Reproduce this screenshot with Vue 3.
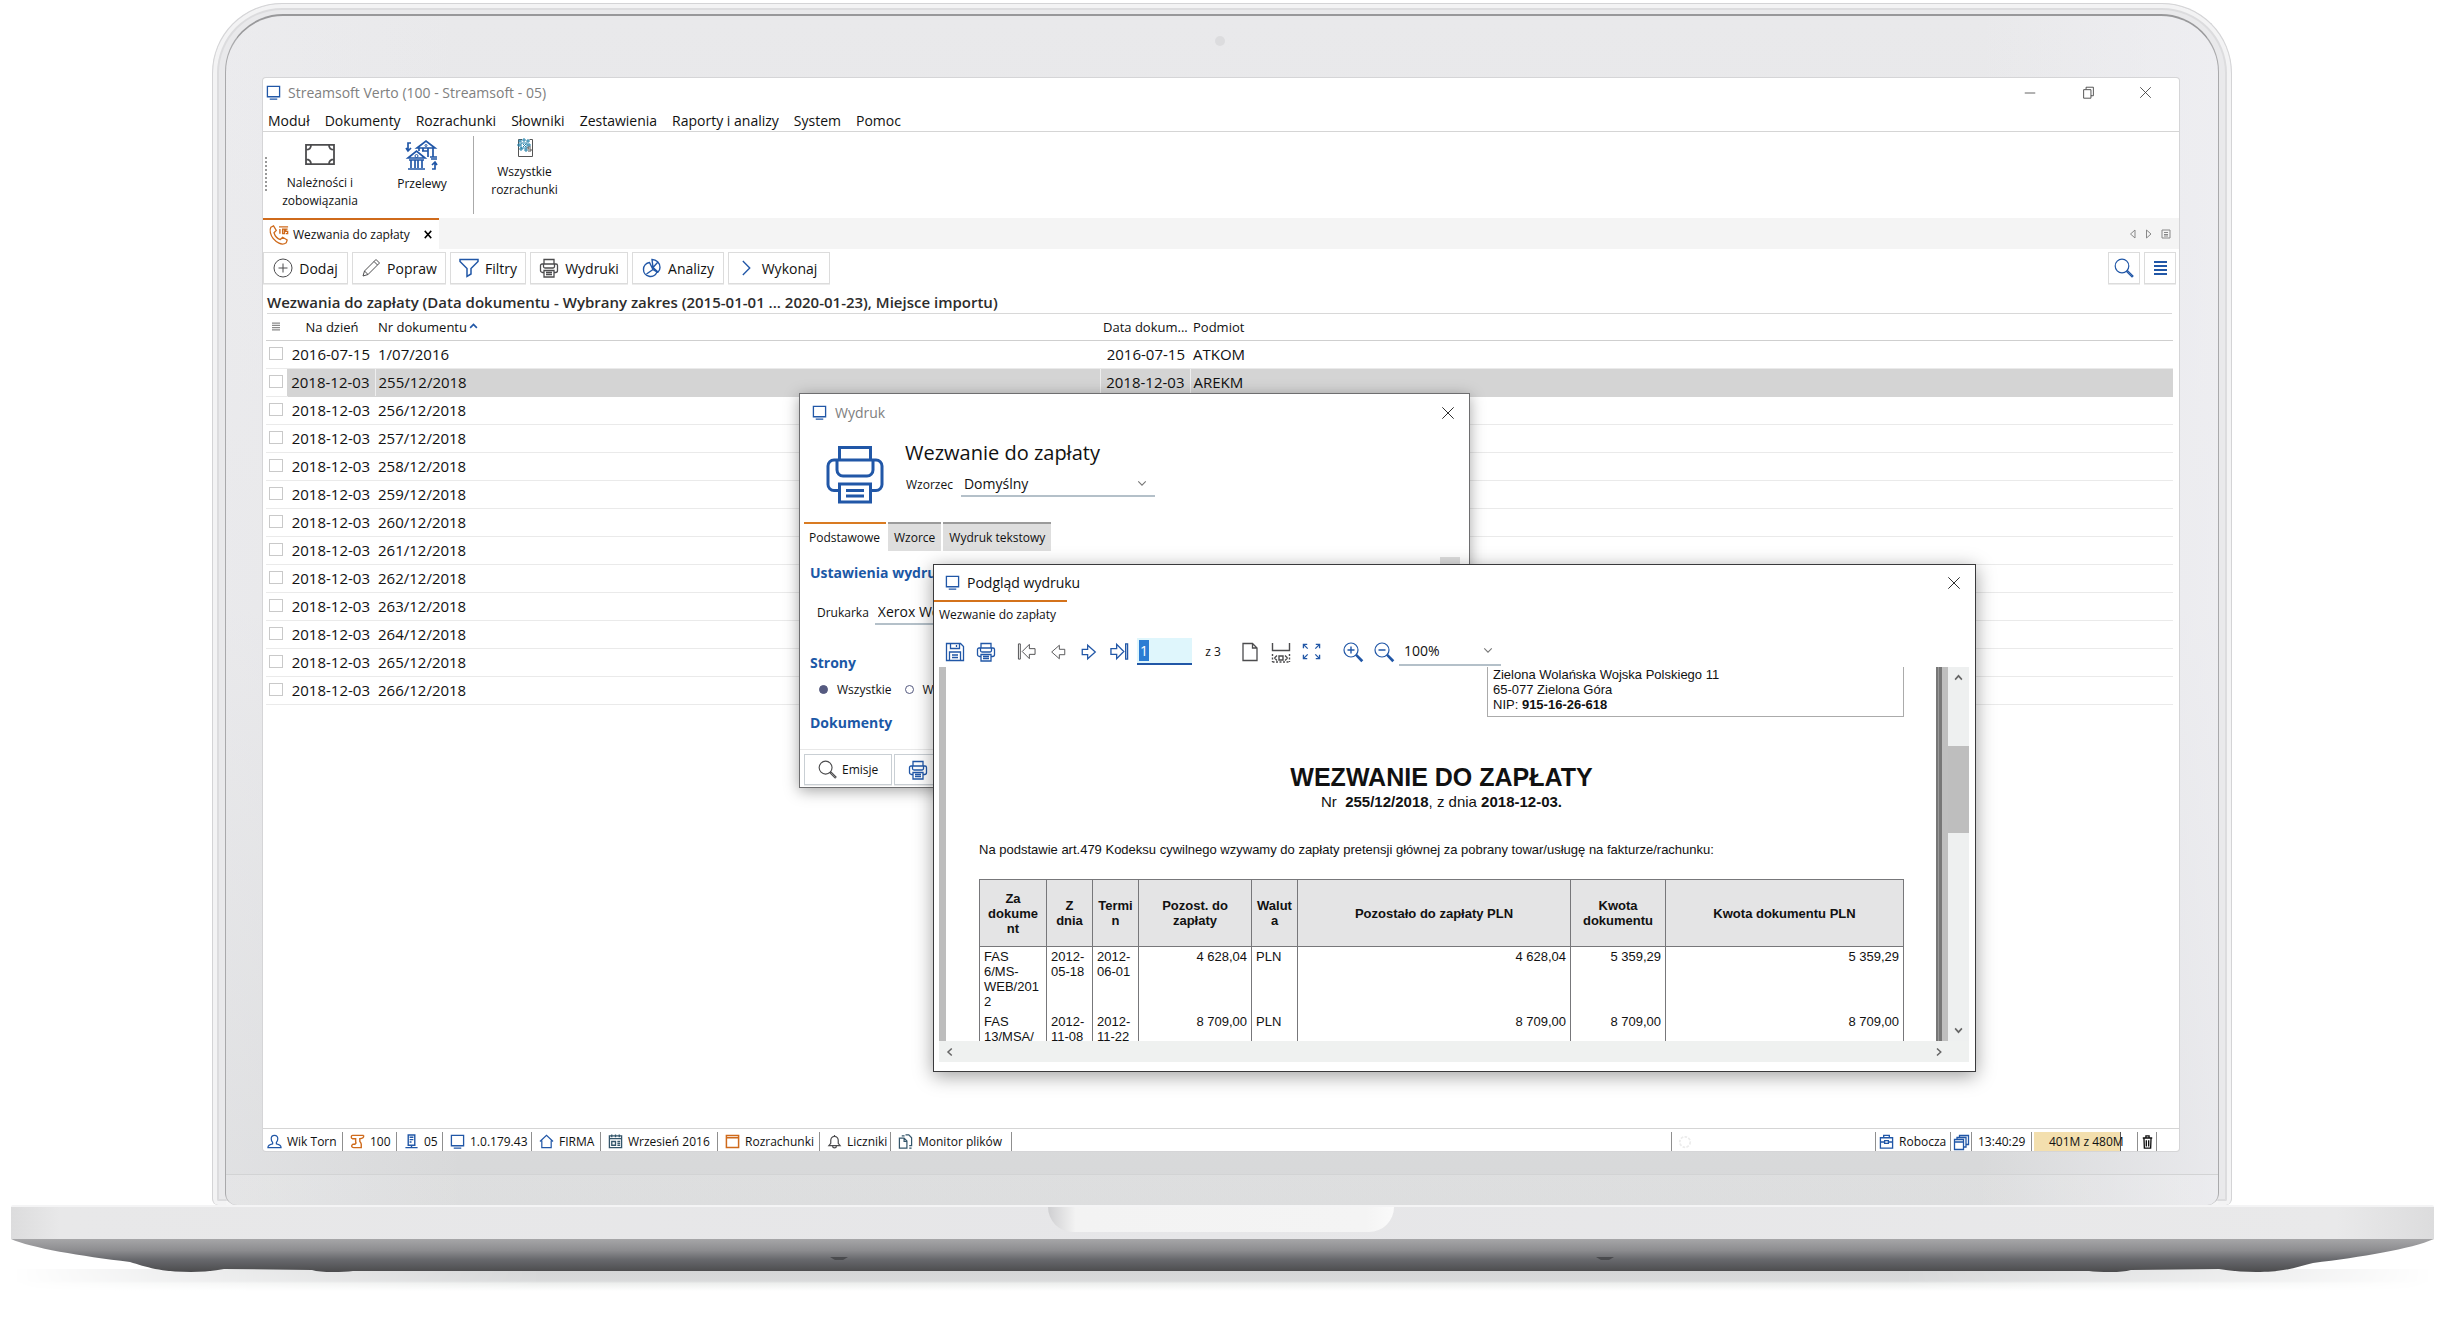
<script setup>
import { h, ref } from 'vue'

const icons = {
  monitor: ['0 0 16 16', '<path d="M1.5 1.5h13v11h-13zM4 15h8" stroke-width="1.4"/>'],
  minimize: ['0 0 16 16', '<path d="M1 8h14"/>'],
  restore: ['0 0 16 16', '<path d="M2 4.500h9v10.500h-9zM5 4V1.500h9v10.500h-3"/>'],
  close: ['0 0 16 16', '<path d="M1.500 1.500l13 13M14.500 1.500l-13 13"/>'],
  banknote: ['0 0 32 24', '<path d="M2 2h28v20H2zM2 7c4 0 5-2 5-5M25 2c0 3 1 5 5 5M30 17c-4 0-5 2-5 5M7 22c0-3-1-5-5-5" stroke-width="1.800"/>'],
  banks: ['0 0 32 32', '<path d="M11 9l9-7 9 7zM13 9v3M17 9v3M22 9v9M27 9v9M24 18h7M25 20h6M2 19l8.500-7 8.500 7zM3 21h15M5 21v8M9 21v8M12 21v8M16 21v8M2 30h17M16 12h6v6M5 4H2v8M0 9l2 3 3-3M26 30h3v-6M26 26l3-3 2 3" stroke-width="1.700"/><circle cx="10.500" cy="17" r="1.500"/><circle cx="20" cy="6.500" r="1"/>'],
  settlement: ['0 0 18 20', '<path d="M6 1.500H2.500v17h14v-17h-3" stroke="#555"/><path d="M3 2h2v2h-2zM7 1h2v2h-2zM11 2h2v2h-2zM2 6h2v2h-2zM5 5h6v5h-6zM12 6h2v2h-2zM4 10h2v2h-2zM9 11h2v2h-2zM7 6l3 3M10 6l-3 3" stroke="#1f7fa8"/><path d="M15 9h-3v2h3v2h-3" stroke="#555"/>'],
  phone: ['0 0 22 22', '<path d="M2 2.500l3-1.500 3 5-2.500 2.500c1 3.500 4 6.500 7 7.500L15 13.500l5 3-1 3c-2 1.500-5 2-8 .5C6 17.500 2.500 13 1.500 8.500 1 6 1 4 2 2.500z" stroke-width="1.400"/><path d="M11 2h10M12 4.500v5M15 4.500h2v5h-2zM20.500 4.500h-2V7h2v2.500h-2" stroke-width="1.500"/>'],
  plus: ['0 0 20 20', '<circle cx="10" cy="10" r="9"/><path d="M10 5.500v9M5.500 10h9"/>'],
  pencil: ['0 0 20 20', '<path d="M2 18l1.500-5L15 1.500l3.500 3.500L7 16.500zM13 3.500l3.500 3.500M3.500 13L7 16.500"/>'],
  funnel: ['0 0 20 20', '<path d="M1 1.500h18v2l-7 7V16l-4 2.500v-8l-7-7z" stroke-width="1.500"/>'],
  printer: ['0 0 20 20', '<path d="M5 6V1.500h10V6M5 14.500H3.500a2 2 0 0 1-2-2v-5A1.500 1.500 0 0 1 3 6h14a1.500 1.500 0 0 1 1.500 1.500v5a2 2 0 0 1-2 2H15M4.500 6v2.500a1.500 1.500 0 0 0 1.500 1.500h8a1.500 1.500 0 0 0 1.500-1.500V6M5 12.500h10v6.500H5zM7 14.500h6M7 16.500h6" stroke-width="1.300"/>'],
  printerBig: ['0 0 58 58', '<path d="M13.500 14V1.500h31V14M13.500 44.500H8a6 6 0 0 1-6-6V20a6 6 0 0 1 6-6h42a6 6 0 0 1 6 6v18.500a6 6 0 0 1-6 6h-5.500M11 14v10a6 6 0 0 0 6 6h24a6 6 0 0 0 6-6V14M13.500 38h31v18h-31zM20 44.500h18M20 50h18" stroke-width="3"/>'],
  pie: ['0 0 20 20', '<path d="M7.500 4.500a7 7 0 1 0 7.500 9.500l-4-2.500-3.500-7zM11 9.500L10 1.500a8 8 0 0 1 8 8c0 2-1 3.500-2 4.500zM11 9.500l4.500-5M11 11.500L4.500 16" stroke-width="1.400"/>'],
  chevronRight: ['0 0 12 20', '<path d="M2 3l7.500 7L2 17" stroke-width="1.500"/>'],
  chevronLeft: ['0 0 12 20', '<path d="M9.500 3L2 10l7.500 7" stroke-width="3"/>'],
  chevronBold: ['0 0 12 20', '<path d="M2 3l7.500 7L2 17" stroke-width="3"/>'],
  chevronDown: ['0 0 12 8', '<path d="M1.500 1.500L6 6l4.500-4.500" stroke-width="1.300"/>'],
  arrowDown: ['0 0 12 8', '<path d="M1.500 1.500L6 6l4.500-4.500" stroke-width="2.200"/>'],
  arrowUp: ['0 0 12 8', '<path d="M1.500 6.500L6 2l4.500 4.500" stroke-width="2.200"/>'],
  search: ['0 0 20 20', '<circle cx="8" cy="8" r="6.800" stroke-width="1.200"/><path d="M12.500 13.500l1-1 5.500 5.500-1 1z" stroke-width="1.200"/>'],
  lines: ['0 0 14 16', '<path d="M0 2h14M0 6h14M0 10h14M0 14h14" stroke-width="1.800"/>'],
  triLeft: ['0 0 8 10', '<path d="M6 1v8L1.500 5z"/>'],
  triRight: ['0 0 8 10', '<path d="M1.500 1v8L6 5z"/>'],
  docList: ['0 0 10 10', '<path d="M1 1h8v8H1zM3 3.500h4M3 5.500h4M3 7h4"/>'],
  user: ['0 0 16 16', '<path d="M8 1.500c-2.500 0-3.500 1.500-3.500 3.500S5 8 6 9v1.500c-2.500.5-5 1.500-5 4h14c0-2.500-2.500-3.500-5-4V9c1-1 1.500-2 1.500-4S10.500 1.500 8 1.500z" stroke-width="1.300"/>'],
  scroll: ['0 0 16 16', '<path d="M2.500 1.500h12M2.500 1.500C1 2 1 4.500 2.500 5H6v3c1 2-1 3-1 3H3C1 12 1.500 14.500 4 14.500h8V11M14.500 1.500c.5 2-1 3.500-4 3.500v3c1 1 1.500 2 1.500 3" stroke-width="1.500"/>'],
  server: ['0 0 16 16', '<path d="M4.500 1h7v11h-7zM6 3.500h4M6 6h4M6 8.500h2M8 12v2.500M1.500 14.500h13" stroke-width="1.500"/>'],
  house: ['0 0 16 16', '<path d="M1 8l7-6.500L15 8M3 7v7.500h10V7" stroke-width="1.300"/>'],
  calendar: ['0 0 16 16', '<path d="M1.500 2h13v12.500h-13zM1.500 5h13M4 .5v3M8 .5v3M12 .5v3M4 8h4v4H4zM10 8h3M10 10h3M10 12h3" stroke-width="1.400"/>'],
  window: ['0 0 16 16', '<path d="M1.500 1.500h13v13h-13zM1.500 4h13" stroke-width="1.600"/>'],
  bell: ['0 0 16 16', '<path d="M8 1v1.500C5 2.500 4 5 4 7v3l-2 2.500h12L12 10V7c0-2-1-4.500-4-4.500M6 13c0 2.500 4 2.500 4 0" stroke-width="1.300"/>'],
  files: ['0 0 16 16', '<path d="M1.500 4.500h5l3 3v7.500h-8zM4 2h3M8 1h3.500l3 3v8.500H12M14.500 15H12M6.500 4.500V8h3" stroke-width="1.300"/>'],
  briefcase: ['0 0 16 16', '<path d="M1.500 4h13v11h-13zM5 4V1.500h6V4M1.500 8.500h4M10.500 8.500h4M6 7h4v3H6z" stroke-width="1.400"/>'],
  windows: ['0 0 16 16', '<path d="M1.500 5.500h9v10h-9zM1.500 8h9M4 5V3.500h9v9.500h-2M6.500 3V1.500h9v9h-2" stroke-width="1.300"/>'],
  trash: ['0 0 14 16', '<path d="M1 3.500h12M5 3V1h4v2M2.500 4l.5 11h8l.5-11M5.500 6v7M8.500 6v7" stroke-width="1.700"/>'],
  save: ['0 0 20 20', '<path d="M1.500 1.500h14l3 3v14h-17zM5.500 1.500v5h9v-5M4.500 18.500v-8.500h11v8.500M7 13h6M7 15.500h6M11.500 3v2" stroke-width="1.300"/>'],
  first: ['0 0 20 20', '<path d="M1.500 2v16h2V2zM19 7v6h-6v4.500L5.500 10 13 2.500V7z"/>'],
  prev: ['0 0 20 20', '<path d="M17.500 7v6h-6v4.500L3 10l8.500-7.500V7z"/>'],
  next: ['0 0 20 20', '<path d="M2.500 7v6h6v4.500L17 10 8.500 2.500V7z" stroke-width="1.400"/>'],
  last: ['0 0 20 20', '<path d="M18.500 2v16h-2V2zM1 7v6h6v4.500L14.500 10 7 2.500V7z" stroke-width="1.400"/>'],
  page: ['0 0 20 20', '<path d="M3 1.500h9.500L17 6v12.500H3zM12.500 1.500V6H17" stroke-width="1.300"/>'],
  pageWidth: ['0 0 20 20', '<path d="M1.500 1v7.500h17V1M3.500 16l2.500-2.500M3.500 16l2.500 2.500M16.500 16L14 13.500M16.500 16L14 18.500M8 14h4v4H8z" stroke-width="1.400"/><path d="M1.500 12v8M18.500 12v8M1.500 20h17" stroke-width="1.400" stroke-dasharray="2 1.500"/>'],
  expand: ['0 0 20 20', '<path d="M1.500 6.500v-4h4M1.500 2.500L6 7M18.500 6.500v-4h-4M18.500 2.500L14 7M1.500 13.500v4h4M1.500 17.500L6 13M18.500 13.500v4h-4M18.500 17.500L14 13" stroke-width="1.400"/>'],
  zoomIn: ['0 0 20 20', '<circle cx="8" cy="8" r="7" stroke-width="1.200"/><path d="M13 13.500l.8-.8 5.500 5.500-1 1zM8 4.500v7M4.500 8h7" stroke-width="1.400"/>'],
  zoomOut: ['0 0 20 20', '<circle cx="8" cy="8" r="7" stroke-width="1.200"/><path d="M13 13.500l.8-.8 5.500 5.500-1 1zM4.500 8h7" stroke-width="1.400"/>'],
  spinner: ['0 0 16 16', '<circle cx="8" cy="8" r="6" stroke-width="2" stroke-dasharray="3 1.500"/>'],
}

const Icon = (props) => {
  const [viewBox, body] = icons[props.name]
  return h('svg', {
    viewBox,
    width: props.w,
    height: props.hh || props.w,
    fill: 'none',
    stroke: 'currentColor',
    'aria-hidden': 'true',
    preserveAspectRatio: 'none',
    innerHTML: body,
  })
}
Icon.props = ['name', 'w', 'hh']

const menu = ['Moduł', 'Dokumenty', 'Rozrachunki', 'Słowniki', 'Zestawienia', 'Raporty i analizy', 'System', 'Pomoc']

const actions = [
  { label: 'Dodaj', icon: 'plus', tone: 'gray', cls: 'a-85' },
  { label: 'Popraw', icon: 'pencil', tone: 'gray', cls: 'a-94' },
  { label: 'Filtry', icon: 'funnel', tone: 'blue', cls: 'a-76' },
  { label: 'Wydruki', icon: 'printer', tone: 'gray', cls: 'a-98' },
  { label: 'Analizy', icon: 'pie', tone: 'blue', cls: 'a-92' },
  { label: 'Wykonaj', icon: 'chevronRight', tone: 'blue', cls: 'a-102' },
]

const rows = ref([
  { day: '2016-07-15', nr: '1/07/2016', date: '2016-07-15', who: 'ATKOM' },
  { day: '2018-12-03', nr: '255/12/2018', date: '2018-12-03', who: 'AREKM', selected: true },
  ...Array.from({ length: 11 }, (_, i) => ({ day: '2018-12-03', nr: `${256 + i}/12/2018`, date: '', who: '' })),
])

const statusLeft = [
  { label: 'Wik Torn', icon: 'user', tone: 'blue', cls: 's-80' },
  { label: '100', icon: 'scroll', tone: 'orange', cls: 's-54' },
  { label: '05', icon: 'server', tone: 'blue', cls: 's-46' },
  { label: '1.0.179.43', icon: 'monitor', tone: 'blue', cls: 's-89' },
  { label: 'FIRMA', icon: 'house', tone: 'blue', cls: 's-69' },
  { label: 'Wrzesień 2016', icon: 'calendar', tone: 'slate', cls: 's-117' },
  { label: 'Rozrachunki', icon: 'window', tone: 'orange', cls: 's-102' },
  { label: 'Liczniki', icon: 'bell', tone: 'gray', cls: 's-71' },
  { label: 'Monitor plików', icon: 'files', tone: 'slate', cls: 's-121' },
]

const docHead = [
  ['Za', 'dokume', 'nt'], ['Z', 'dnia'], ['Termi', 'n'], ['Pozost. do', 'zapłaty'],
  ['Walut', 'a'], ['Pozostało do zapłaty PLN'], ['Kwota', 'dokumentu'], ['Kwota dokumentu PLN'],
].map((lines) => lines.join('\n'))

const docRows = [
  ['FAS\n6/MS-\nWEB/201\n2', '2012-\n05-18', '2012-\n06-01', '4 628,04', 'PLN', '4 628,04', '5 359,29', '5 359,29'],
  ['FAS\n13/MSA/', '2012-\n11-08', '2012-\n11-22', '8 709,00', 'PLN', '8 709,00', '8 709,00', '8 709,00'],
]
const numeric = [3, 5, 6, 7]

const pageNo = ref('1')
const range = ref('all')
</script>

<template>
  <div class="stage">
    <div class="lid">
      <div class="bezel">
        <span class="camera"></span>
        <main class="screen">
          <header class="titlebar">
            <Icon name="monitor" w="15" class="blue" />
            <h1>Streamsoft Verto (100 - Streamsoft - 05)</h1>
            <button type="button" aria-label="Minimalizuj"><Icon name="minimize" w="12" /></button>
            <button type="button" aria-label="Przywróć"><Icon name="restore" w="13" /></button>
            <button type="button" aria-label="Zamknij"><Icon name="close" w="13" /></button>
          </header>

          <nav class="menubar">
            <a v-for="m in menu" :key="m" href="#">{{ m }}</a>
          </nav>

          <div class="ribbon">
            <span class="grip"></span>
            <button type="button" class="big wide"><Icon name="banknote" w="32" hh="23" class="gray" /><span>Należności i zobowiązania</span></button>
            <button type="button" class="big"><Icon name="banks" w="32" class="blue" /><span>Przelewy</span></button>
            <button type="button" class="big last"><Icon name="settlement" w="18" hh="20" /><span>Wszystkie rozrachunki</span></button>
          </div>

          <div class="tabstrip">
            <div class="tab">
              <Icon name="phone" w="20" class="orange" />
              <span>Wezwania do zapłaty</span>
              <button type="button" aria-label="Zamknij kartę"><Icon name="close" w="8" hh="9" /></button>
            </div>
            <div class="tabnav">
              <Icon name="triLeft" w="8" hh="10" /><Icon name="triRight" w="8" hh="10" /><Icon name="docList" w="10" />
            </div>
          </div>

          <div class="actions">
            <button v-for="a in actions" :key="a.label" type="button" class="box" :class="a.cls">
              <Icon :name="a.icon" :w="a.icon === 'chevronRight' ? 11 : 20" hh="20" :class="a.tone" />{{ a.label }}
            </button>
            <span class="fill"></span>
            <button type="button" class="box sq" aria-label="Szukaj"><Icon name="search" w="20" class="blue" /></button>
            <button type="button" class="box sq" aria-label="Widok"><Icon name="lines" w="13" hh="16" class="blue" /></button>
          </div>

          <h2 class="caption">Wezwania do zapłaty (Data dokumentu - Wybrany zakres (2015-01-01 ... 2020-01-23), Miejsce importu)</h2>

          <div class="listwrap">
            <table class="list">
              <colgroup><col class="c-check" /><col class="c-day" /><col class="c-nr" /><col class="c-date" /><col /></colgroup>
              <thead>
                <tr>
                  <th><Icon name="lines" w="8" hh="9" class="faint" /></th>
                  <th class="mid">Na dzień</th>
                  <th>Nr dokumentu<Icon name="arrowUp" w="9" hh="6" class="blue sort" /></th>
                  <th>Data dokum...</th>
                  <th>Podmiot</th>
                </tr>
              </thead>
              <tbody>
                <tr v-for="r in rows" :key="r.nr" :class="{ sel: r.selected }">
                  <td><input type="checkbox" :aria-label="r.nr" /></td>
                  <td class="num">{{ r.day }}</td>
                  <td>{{ r.nr }}</td>
                  <td class="num">{{ r.date }}</td>
                  <td>{{ r.who }}</td>
                </tr>
              </tbody>
            </table>
          </div>

          <footer class="status">
            <span v-for="s in statusLeft" :key="s.label" class="seg" :class="s.cls"><Icon :name="s.icon" w="15" :class="s.tone" />{{ s.label }}</span>
            <span class="seg fill"></span>
            <span class="seg s-204"><Icon name="spinner" w="14" class="ghost" /></span>
            <span class="seg s-75"><Icon name="briefcase" w="15" class="blue" />Robocza</span>
            <span class="seg s-21"><Icon name="windows" w="16" class="blue" /></span>
            <span class="seg s-60">13:40:29</span>
            <span class="seg mem"><span class="gauge"></span><span class="memtext">401M z 480M</span></span>
            <button type="button" class="seg bin" aria-label="Opróżnij"><Icon name="trash" w="11" hh="14" /></button>
          </footer>

          <section class="win print">
            <header>
              <Icon name="monitor" w="15" class="blue" /><h2>Wydruk</h2>
              <button type="button" aria-label="Zamknij"><Icon name="close" w="14" /></button>
            </header>
            <div class="hero">
              <Icon name="printerBig" w="58" class="blue" />
              <div>
                <h3>Wezwanie do zapłaty</h3>
                <div class="field">
                  <label for="tpl">Wzorzec</label>
                  <span class="combo tpl"><select id="tpl"><option>Domyślny</option></select><Icon name="chevronDown" w="10" hh="7" /></span>
                </div>
              </div>
            </div>
            <div class="tabs">
              <button type="button" class="on">Podstawowe</button>
              <button type="button">Wzorce</button>
              <button type="button">Wydruk tekstowy</button>
            </div>
            <div class="form">
              <h4>Ustawienia wydruku</h4>
              <div class="field printer">
                <label for="prn">Drukarka</label>
                <span class="combo prn"><select id="prn"><option>Xerox WorkCentre</option></select></span>
              </div>
              <h4>Strony</h4>
              <div class="radios">
                <label><input v-model="range" type="radio" value="all" />Wszystkie</label>
                <label><input v-model="range" type="radio" value="some" />Wybrane</label>
              </div>
              <h4>Dokumenty</h4>
              <span class="sliver"></span>
            </div>
            <div class="foot">
              <button type="button" class="box"><Icon name="search" w="19" class="gray" />Emisje</button>
              <button type="button" class="box"><Icon name="printer" w="20" class="blue" />Drukuj</button>
            </div>
          </section>

          <section class="win preview">
            <header>
              <Icon name="monitor" w="15" class="blue" /><h2>Podgląd wydruku</h2>
              <button type="button" aria-label="Zamknij"><Icon name="close" w="14" /></button>
            </header>
            <div class="ptab">Wezwanie do zapłaty</div>
            <div class="ptools">
              <button type="button" aria-label="Zapisz"><Icon name="save" w="20" class="blue" /></button>
              <button type="button" aria-label="Drukuj"><Icon name="printer" w="20" class="blue" /></button>
              <span class="gap"></span>
              <button type="button" aria-label="Pierwsza"><Icon name="first" w="19" class="gray" /></button>
              <button type="button" aria-label="Poprzednia"><Icon name="prev" w="18" class="gray" /></button>
              <button type="button" aria-label="Następna"><Icon name="next" w="18" class="blue" /></button>
              <button type="button" aria-label="Ostatnia"><Icon name="last" w="19" class="blue" /></button>
              <span class="pageno"><input v-model="pageNo" type="text" aria-label="Strona" /></span>
              <span class="of">z 3</span>
              <button type="button" aria-label="Cała strona"><Icon name="page" w="20" class="gray" /></button>
              <button type="button" aria-label="Szerokość strony"><Icon name="pageWidth" w="20" class="gray" /></button>
              <button type="button" aria-label="Pełny ekran"><Icon name="expand" w="19" class="blue" /></button>
              <span class="gap"></span>
              <button type="button" aria-label="Powiększ"><Icon name="zoomIn" w="20" class="blue" /></button>
              <button type="button" aria-label="Pomniejsz"><Icon name="zoomOut" w="20" class="blue" /></button>
              <span class="combo zoom"><select aria-label="Powiększenie"><option>100%</option></select><Icon name="chevronDown" w="10" hh="7" /></span>
            </div>
            <div class="view">
              <div class="paper">
                <address>Zielona Wolańska Wojska Polskiego 11<br />65-077 Zielona Góra<br />NIP: <b>915-16-26-618</b></address>
                <h3>WEZWANIE DO ZAPŁATY</h3>
                <p class="sub">Nr&nbsp; <b>255/12/2018</b>, z dnia <b>2018-12-03.</b></p>
                <p class="lead">Na podstawie art.479 Kodeksu cywilnego wzywamy do zapłaty pretensji głównej za pobrany towar/usługę na fakturze/rachunku:</p>
                <table class="doc">
                  <colgroup><col class="d1" /><col class="d2" /><col class="d2" /><col class="d4" /><col class="d2" /><col /><col class="d7" /><col class="d8" /></colgroup>
                  <thead><tr><th v-for="t in docHead" :key="t">{{ t }}</th></tr></thead>
                  <tbody>
                    <tr v-for="(r, i) in docRows" :key="i">
                      <td v-for="(c, j) in r" :key="j" :class="{ num: numeric.includes(j) }">{{ c }}</td>
                    </tr>
                  </tbody>
                </table>
              </div>
              <div class="vbar"><Icon name="arrowUp" w="9" hh="7" /><span class="thumb"></span><Icon name="arrowDown" w="9" hh="7" /></div>
            </div>
            <div class="hbar"><Icon name="chevronLeft" w="6" hh="10" /><Icon name="chevronBold" w="6" hh="10" /></div>
          </section>
        </main>
        <div class="chin"></div>
      </div>
    </div>

    <div class="base">
      <div class="deck"><span class="notch"></span></div>
      <svg class="under" viewBox="0 0 2423 34" preserveAspectRatio="none" aria-hidden="true">
        <defs>
          <linearGradient id="steel" x1="0" y1="0" x2="0" y2="1">
            <stop offset="0" stop-color="#a6a6a8" /><stop offset=".35" stop-color="#8c8c8f" />
            <stop offset=".62" stop-color="#68696d" /><stop offset="1" stop-color="#4b4b4d" />
          </linearGradient>
        </defs>
        <path fill="url(#steel)" d="M0 0H2423C2400 10 2350 18 2302 24C2285 28 2275 33 2245 33Q2225 33 2208 30L2120 31Q2112 33 2100 33Q2085 33 2078 32H342Q334 33 322 33Q308 33 301 31L213 30Q198 33 180 33C150 33 135 28 119 23C70 17 20 9 0 0Z" />
        <path fill="#4a4b4e" d="M819 18h18l-5 3h-8zM1585 18h18l-5 3h-8z" />
      </svg>
      <div class="shadow"></div>
    </div>
  </div>
</template>

<style>
html, body { background: #fff; }
body { margin: 0; }
</style>

<style scoped>
* { box-sizing: border-box; }
h1, h2, h3, h4, p { margin: 0; font-weight: 400; }
button, input, select { font: inherit; color: inherit; margin: 0; padding: 0; border: 0; border-radius: 0; background: none; }
a { color: inherit; text-decoration: none; }
svg { display: block; flex: none; overflow: visible; }

.stage { min-height: 100vh; overflow: hidden; padding-top: 3px; font-family: "Open Sans", "Noto Sans", sans-serif; font-size: 13px; color: #111; }
.blue { color: #2157a7; }
.gray { color: #4c4c4e; }
.orange { color: #cf6a1b; }
.slate { color: #34566b; }
.faint { color: #8a8a8a; }
.ghost { color: #ececec; }
.fill { flex: 1; }

.lid {
  margin: 0 218px 0 212px; padding: 10px 12px 0; border-radius: 70px 70px 6px 6px;
  background: #e9e9eb; border: 1px solid #d4d4d6; border-bottom: 0;
  box-shadow: inset 0 0 0 4px #f3f3f4, inset 0 0 0 6px #dcdcde;
}
.bezel {
  position: relative; border: 1px solid #a9a9ab; border-top: 2px solid #98989a; border-bottom: 0; border-radius: 58px 58px 12px 12px;
  background: linear-gradient(90deg, rgba(240, 240, 243, .35), transparent 12%, transparent 88%, rgba(240, 240, 244, .7)), linear-gradient(#e9e9eb, #e6e6e8 50%, #d7d8d9);
  padding: 62px 39px 0 37px;
}
.chin { height: 54px; margin: 0 -39px 0 -37px; background: linear-gradient(transparent 23px, #d2d3d4 23px, #d2d3d4 24px, rgba(255, 255, 255, .15) 24px); }
.camera { position: absolute; top: 20px; left: 50%; width: 10px; height: 10px; margin-left: -7px; border-radius: 50%; background: #dcdcde; }

.screen {
  position: relative; display: flex; flex-direction: column; min-height: calc(100vh - 260px);
  background: #fff; border-radius: 3px; overflow: hidden; box-shadow: 0 0 0 1px #d5d5d7;
}
.titlebar { display: flex; align-items: center; height: 31px; padding: 0 7px 2px 3px; color: #333; }
.titlebar h1 { flex: 1; margin-left: 7px; font-size: 14px; color: #808080; }
.titlebar button { display: grid; place-items: center; width: 59px; height: 28px; }
.titlebar button:last-child { width: 54px; }
.menubar { display: flex; align-items: center; gap: 15px; height: 23px; padding-left: 5px; border-bottom: 1px solid #d5d5d5; font-size: 14px; }

.ribbon { display: flex; align-items: flex-start; height: 86px; padding: 4px 0 0 1px; }
.grip { width: 2px; height: 34px; margin: 21px 2px 0 1px; border-left: 2px dotted #999; }
.big { display: flex; flex-direction: column; align-items: center; gap: 4px; width: 102px; height: 78px; padding-top: 3px; font-size: 12px; line-height: 18px; }
.big.wide { padding-top: 7px; gap: 8px; padding-left: 6px; padding-right: 6px; }
.big.last { border-left: 1px solid #aaa; padding: 2px 12px 0; gap: 5px; }

.tabstrip { display: flex; justify-content: space-between; height: 31px; background: #f4f4f4; }
.tab { display: flex; align-items: center; gap: 4px; width: 176px; padding-left: 6px; background: #fff; border-top: 2px solid #cf6a1b; font-size: 12px; white-space: nowrap; }
.tab button { display: grid; place-items: center; margin-left: 10px; }
.tab button svg { stroke-width: 3; color: #000; }
.tabnav { display: flex; align-items: center; gap: 8px; padding-right: 8px; color: #888; }

.actions { display: flex; gap: 4px; padding: 3px 3px 0 0; }
.box { display: flex; align-items: center; justify-content: center; gap: 6px; height: 32px; border: 1px solid #dcdcdc; background: #fff; font-size: 14px; white-space: nowrap; box-shadow: 0 1px 0 #ececec; }
.a-85 { width: 85px; } .a-94 { width: 94px; } .a-76 { width: 76px; } .a-98 { width: 98px; } .a-92 { width: 92px; } .a-102 { width: 102px; gap: 10px; }
.box.sq { width: 32px; }

.caption { height: 30px; margin: 0 7px 0 4px; padding-top: 8px; border-bottom: 1px solid #d8d8d8; font-size: 15px; line-height: 20px; font-weight: 600; color: #2c2c2c; white-space: nowrap; }
.listwrap { flex: 1; padding: 0 6px 0 3px; }
.list { width: 100%; table-layout: fixed; border-collapse: collapse; font-size: 15px; white-space: nowrap; }
.list th { height: 26px; padding: 0 3px; text-align: left; font-weight: 400; font-size: 13px; border-bottom: 1px solid #cfcfcf; }
.list th.mid { text-align: center; padding-left: 5px; }
.list th:first-child svg { margin-left: 3px; }
.sort { display: inline-block; margin-left: 2px; vertical-align: 3px; }
.list td { height: 28px; padding: 0 3px 1px; border-bottom: 1px solid #eaeaea; }
.list td.num { text-align: right; padding-right: 5px; }
.c-check { width: 21px; } .c-day { width: 88px; } .c-nr { width: 725px; } .c-date { width: 90px; }
.sel td:not(:first-child) { background: #d4d4d4; border-left: 1px solid #eee; border-bottom-color: #d4d4d4; }
.sel td:nth-child(2) { border-left-color: #d4d4d4; }
.list input { appearance: none; display: block; width: 14px; height: 13px; border: 1px solid #c9c9c9; background: #fff; }

.status { display: flex; height: 23px; padding: 3px 22px 0 0; border-top: 1px solid #d5d5d5; font-size: 12px; white-space: nowrap; }
.seg { display: flex; align-items: center; gap: 5px; height: 19px; padding-left: 4px; border-right: 1px solid #8f8f8f; }
.seg:nth-child(n+2):nth-child(-n+9) { padding-left: 7px; }
.s-80 { width: 80px; } .s-54 { width: 54px; } .s-46 { width: 46px; } .s-89 { width: 89px; } .s-69 { width: 69px; } .s-117 { width: 117px; }
.s-102 { width: 102px; } .s-71 { width: 71px; } .s-121 { width: 121px; } .s-204 { width: 204px; padding-left: 6px; }
.s-75 { width: 75px; padding-left: 3px; } .s-21 { width: 21px; padding-left: 2px; } .s-60 { width: 60px; padding-left: 6px; }
.mem { display: grid; width: 106px; padding: 0 0 0 2px; }
.gauge { grid-area: 1 / 1; width: 87px; height: 19px; background: #f3dfae; border-right: 1px solid #555; }
.memtext { grid-area: 1 / 1; padding-left: 15px; }
.bin { width: 19px; padding-left: 4px; }

.win { position: absolute; display: flex; flex-direction: column; background: #fff; border: 1px solid #6e6e70; }
.win header { display: flex; align-items: center; flex: none; }
.win header h2 { flex: 1; font-size: 14px; }
.combo { display: grid; align-items: center; border-bottom: 2px solid #b4c0c9; }
.combo select { grid-area: 1 / 1; appearance: none; width: 100%; height: 100%; padding-left: 3px; font-size: 14px; }
.combo svg { grid-area: 1 / 1; justify-self: end; margin-right: 8px; color: #777; }
.field { display: flex; align-items: center; }

.print { left: 536px; top: 315px; width: 671px; height: 395px; box-shadow: 0 3px 14px rgba(0, 0, 0, .35); }
.print header { height: 37px; padding: 0 14px 0 12px; }
.print header h2 { margin-left: 8px; color: #808080; }
.hero { display: flex; gap: 21px; height: 91px; padding: 8px 0 0 26px; }
.hero > svg { margin-top: 7px; }
.hero h3 { font-size: 20px; line-height: 28px; }
.hero .field { margin-top: 5px; height: 25px; gap: 8px; font-size: 12px; padding-left: 1px; }
.tpl { width: 194px; height: 25px; }
.tabs { display: flex; gap: 2px; height: 29px; padding-left: 4px; font-size: 12px; }
.tabs button { padding: 0 6px 1px; height: 29px; border-top: 2px solid #9b9b9b; background: #dedede; }
.tabs .on { padding-left: 5px; border-color: #d97b22; background: #fff; }
.form { display: flex; flex-direction: column; flex: 1; padding: 12px 9px 0 10px; position: relative; }
.form h4 { font-size: 14px; line-height: 20px; font-weight: 700; color: #1b58a6; white-space: nowrap; }
.form .printer { height: 24px; margin: 17px 0 29px 7px; gap: 6px; font-size: 12px; }
.prn { width: 300px; height: 26px; }
.radios { display: flex; gap: 13px; height: 20px; margin: 6px 0 14px 9px; font-size: 12px; }
.radios label { display: flex; align-items: center; gap: 9px; }
.radios input { appearance: none; width: 9px; height: 9px; border: 1px solid #555a80; border-radius: 50%; background: #fff; }
.radios input:checked { background: #555a80; }
.sliver { position: absolute; right: 9px; top: 6px; width: 20px; height: 24px; background: #dedede; }
.foot { display: flex; gap: 2px; padding: 4px 4px 2px; border-top: 1px solid #e8e8e8; }
.foot .box { padding: 0 13px; gap: 5px; height: 31px; font-size: 12px; border-color: #c9cfd4; }

.preview { left: 670px; top: 486px; width: 1043px; height: 508px; border-color: #3a3a3c; box-shadow: 0 4px 18px rgba(0, 0, 0, .38); }
.preview header { height: 35px; padding: 0 14px 0 11px; }
.preview header h2 { margin-left: 7px; }
.ptab { align-self: flex-start; height: 26px; width: 133px; padding-left: 5px; border-top: 2px solid #d4721b; font-size: 12px; line-height: 26px; white-space: nowrap; }
.ptools { display: flex; align-items: center; height: 41px; padding: 10px 0 0 5px; }
.ptools button { display: grid; place-items: center; width: 31px; height: 28px; }
.ptools .gap { width: 10px; }
.pageno { width: 55px; height: 27px; margin-left: 2px; padding: 2px; background: #dff6fc; border-bottom: 2px solid #2157a7; }
.pageno input { display: block; width: 10px; height: 21px; background: #2b7cd3; color: #fff; font-size: 14px; text-align: center; }
.of { width: 42px; text-align: center; font-size: 12px; }
.zoom { width: 102px; height: 29px; }
.zoom select { padding-left: 5px; }

.view { display: flex; flex: 1; min-height: 0; margin: 0 6px 0 5px; border-left: 7px solid #bdbdbd; background: #bfbfbf; }
.paper { flex: 1; overflow: hidden; padding: 0 32px 0 33px; background: #fff; box-shadow: 2px 0 0 #777, 3px 0 0 #999, 6px 0 0 #777; font-family: "Liberation Sans", Arial, sans-serif; font-size: 13px; line-height: 15px; }
address { width: 417px; height: 50px; margin-left: auto; padding: 0 5px; border: 1px solid #ababab; border-top: 0; font-style: normal; }
.paper h3 { margin-top: 45px; text-align: center; font-size: 25px; line-height: 30px; font-weight: 700; }
.sub { text-align: center; font-size: 15px; line-height: 20px; }
.lead { margin: 28px 0 19px; line-height: 20px; white-space: nowrap; }
.doc { width: 100%; table-layout: fixed; border-collapse: collapse; white-space: pre; }
.doc th { height: 67px; padding: 0; border: 1px solid #77777a; background: #e4e4e5; font-weight: 700; }
.doc td { height: 65px; padding: 2px 4px 2px; vertical-align: top; border: 1px solid #77777a; border-top: 0; border-bottom: 0; }
.doc .num { text-align: right; }
.d1 { width: 67px; } .d2 { width: 46px; } .d4 { width: 113px; } .d7 { width: 95px; } .d8 { width: 238px; }
.vbar { display: flex; flex-direction: column; align-items: center; width: 21px; margin-left: 12px; padding: 7px 0; background: #eef0f0; color: #666; }
.thumb { width: 21px; height: 87px; margin: 65px 0 auto; background: #bebebe; }
.hbar { display: flex; align-items: center; justify-content: space-between; height: 21px; margin: 0 6px 9px 5px; padding: 0 27px 0 8px; background: #eff1f0; color: #666; }

.base { margin: 0 16px 0 11px; }
.deck { position: relative; height: 34px; border-top: 2px solid #f4f4f5; border-radius: 2px 2px 0 0; background: linear-gradient(90deg, #dcdcdd, #e8e8e9 2%, #e6e6e8 50%, #e9e9ea 96%, #dcdcdd); }
.notch { position: absolute; top: 0; left: 43%; width: 346px; height: 25px; margin-left: -5px; border-radius: 0 0 28px 28px; background: linear-gradient(90deg, #cfcfd1, #f3f3f3 8%, #f4f4f4 92%, #fafafa); }
.under { width: 100%; height: 34px; position: relative; z-index: 1; }
.shadow {
  height: 22px; margin-top: -4px;
  background: linear-gradient(#d4d5d6, #dadbdc 55%, #eceeed 65%, #fff);
  mask-image: linear-gradient(90deg, transparent, rgba(0, 0, 0, .35) 6%, #000 22%, #000 78%, rgba(0, 0, 0, .35) 94%, transparent);
}
</style>
